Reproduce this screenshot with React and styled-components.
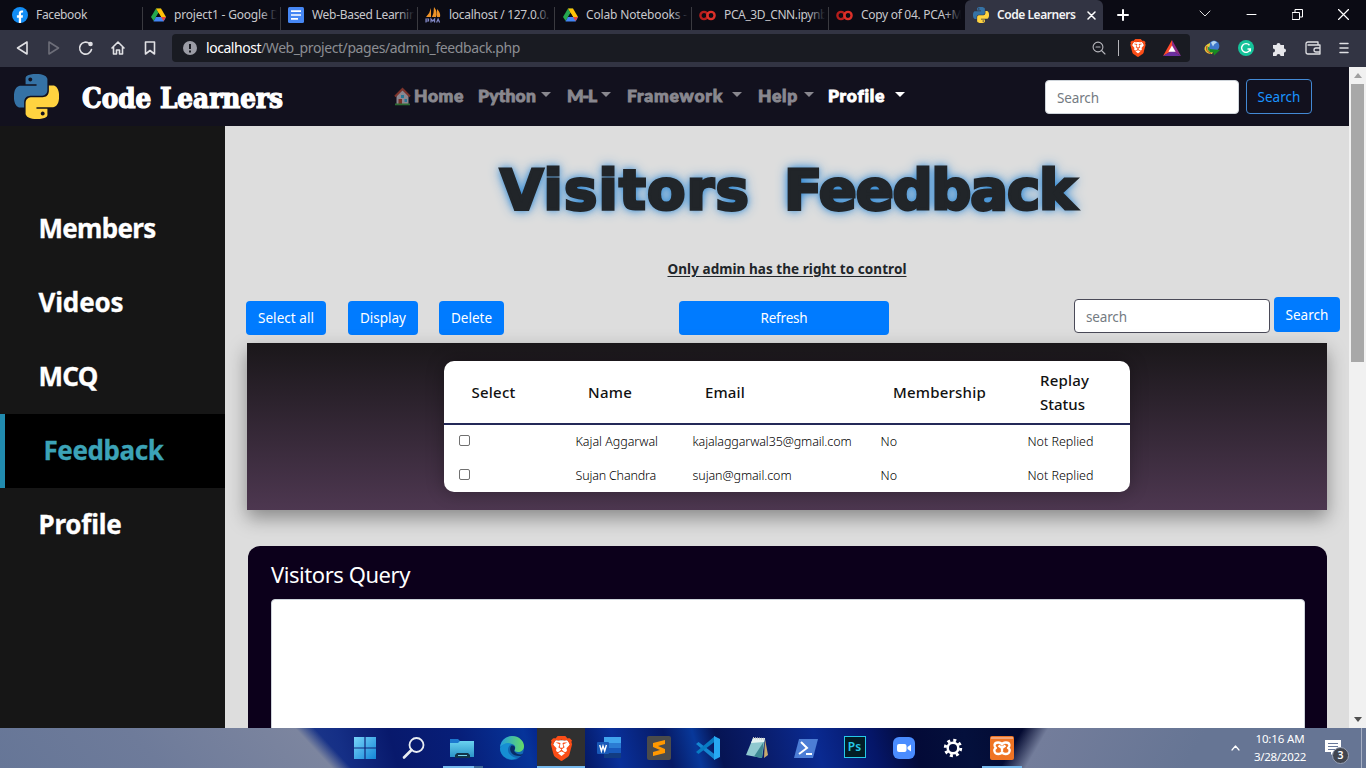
import React, { useLayoutEffect, useRef, useState } from 'react';
import styled, { createGlobalStyle, css } from 'styled-components';
import { SiBrave } from 'react-icons/si';

const UI = '"Noto Sans", "Open Sans", sans-serif';

const Global = createGlobalStyle`
  * { box-sizing: border-box; }
  html, body { margin: 0; width: 1366px; height: 768px; overflow: hidden; }
  body { font: 13px ${UI}; background: #ddd; }
  svg { display: block; flex: none; }
  button, input { font-family: inherit; }
`;

/* Text that is tracked so that it takes exactly the width it is given. */
const Tracked = styled.span`
  display: inline-block;
  flex: none;
  justify-self: start;
  white-space: nowrap;
`;
function Fit({ w, children }) {
  const ref = useRef(null);
  const [gap, setGap] = useState(0);
  useLayoutEffect(() => {
    const natural = ref.current.getBoundingClientRect().width;
    setGap((w - natural) / children.length);
  }, []);
  return <Tracked ref={ref} style={{ letterSpacing: gap + 'px' }}>{children}</Tracked>;
}

const Screen = styled.div`
  width: 1366px; height: 768px; display: flex; flex-direction: column; overflow: hidden;
`;

/* ---------- browser chrome ---------- */
const TabBar = styled.div`
  height: 30px; flex: none; display: flex; background: #0b0b14; color: #c8c8cc; font-size: 12px;
`;
const Tab = styled.div`
  width: ${p => p.$w}px; height: 30px; flex: none; display: flex; align-items: center;
  padding-left: ${p => p.$pad || 7}px; gap: 8px; overflow: hidden; position: relative; line-height: 30px;
  ${p => p.$active ? css`background: #323443; color: #f3f3f5; font-weight: 600; border-radius: 6px 6px 0 0; svg:last-child { margin-left: 3px; }` : ''}
  ${p => p.$fade ? css`&::before { content: ''; position: absolute; right: 1px; top: 0; width: 19px; height: 30px;
    background: linear-gradient(90deg, rgba(11,11,20,0), #0b0b14 85%); }` : ''}
  ${p => p.$line ? css`&::after { content: ''; position: absolute; right: 0; top: 7px; width: 1px; height: 23px; background: #3a3a40; }` : ''}
`;
const WindowButtons = styled.div`
  margin-left: auto; display: flex; width: 167px; justify-content: space-between; align-items: center; padding: 0 17px 2px 0;
`;
const NewTab = styled.div` display: flex; align-items: center; padding-left: 14px; `;
const ToolBar = styled.div`
  height: 37px; flex: none; display: flex; align-items: center; background: #323443; padding: 0 0 1px 14px;
`;
const NavIcons = styled.div` width: 158px; display: flex; gap: 16px; flex: none; `;
const Address = styled.div`
  width: 1018px; height: 28px; border-radius: 4px; background: #191b22; display: flex; align-items: center;
  padding: 0 9px 0 11px; color: #8c8e93; font-size: 14px; flex: none;
`;
const Url = styled.div` margin-left: 9px; flex: 1; display: flex; line-height: 28px; b { font-weight: 400; color: #fff; } `;
const Extensions = styled.div` flex: 1; display: flex; align-items: center; justify-content: space-between; padding: 0 17px 0 14px; `;
const AddressIcons = styled.div` display: flex; align-items: center; gap: 11px; `;
const Divider = styled.i` width: 1px; height: 16px; background: #b5b5ba; margin-left: 1px; `;
const Shield = styled.div` margin: 0 5px 0 -1px; `;

/* ---------- page ---------- */
const Viewport = styled.div` height: 661px; display: flex; flex: none; `;
const Page = styled.div` width: 1349px; display: flex; flex-direction: column; `;
const NavBar = styled.header`
  height: 59px; flex: none; background: #12111e; display: flex; align-items: flex-start; padding-left: 14px;
`;
const Logo = styled.div` padding-top: 7px; width: 68px; `;
const Brand = styled.div`
  width: 312px; color: #fff; font: bold 27.5px/62px "DejaVu Serif Condensed", "DejaVu Serif", serif; font-stretch: condensed;
  -webkit-text-stroke: 1.2px #fff;
`;
const Menu = styled.nav` width: 651px; display: flex; font: 900 17.5px/58px Lato, sans-serif; color: #89888f; `;
const MenuItem = styled.div`
  display: flex; align-items: center; height: 58px; width: ${p => p.$w}px; flex: none;
  -webkit-text-stroke: 0.9px currentColor; ${p => p.$on ? 'color: #fff;' : ''}
  svg { margin-right: 3px; }
`;
const Caret = styled.i`
  margin: 0 0 4px ${p => p.$gap}px; border: solid transparent; border-top-color: currentColor; border-width: 5.500px 5.500px 0;
`;
const Field = styled.input`
  width: ${p => p.$w}px; height: 34px; margin-top: ${p => p.$top || 0}px; padding: 2px 11px 0; border: 1px solid ${p => p.$line};
  border-radius: 4px; background: #fff; font-size: 13.5px; outline: 0; flex: none; letter-spacing: -0.15px;
  &::placeholder { color: #747b82; opacity: 1; }
`;
const OutlineButton = styled.button`
  width: 66px; height: 35px; margin: 12px 0 0 7px; padding: 2px 0 0; border: 1px solid #4389d4; border-radius: 4px;
  background: transparent; color: #1a94ff; font-size: 13.5px; line-height: 31px;
`;
const Body = styled.div` height: 602px; display: flex; `;
const SideBar = styled.aside` width: 225px; background: #161616; padding-top: 66px; flex: none; `;
const SideItem = styled.div`
  height: 74px; display: flex; align-items: center; padding: 0 0 3px 38.500px; color: #fff;
  font: bold 26px/70px "Noto Sans", sans-serif; -webkit-text-stroke: 0.3px currentColor;
  ${p => p.$on ? css`background: #000; color: #3ca3b7; border-left: 5px solid #218baf;` : ''}
`;
const Main = styled.main` width: 1124px; background: #ddd; overflow: hidden; display: flex; flex-direction: column; `;
const Title = styled.h1`
  margin: 26px 0 0 275px; height: 75px; display: flex; gap: 34px; color: #212529; flex: none;
  font: bold 56px/75px "DejaVu Sans", sans-serif;
  -webkit-text-stroke: 3px #212529; text-shadow: 0 0 13px #2a86d4, 0 0 7px #2a86d4;
`;
const Note = styled.div`
  margin: 30px 0 0 442.5px; height: 25px; flex: none; line-height: 24px; font-size: 13.5px; font-weight: 700; color: #212529;
  span { text-decoration: underline; text-underline-offset: 2px; }
`;
const Actions = styled.div` margin-top: 15px; height: 46px; flex: none; padding-left: 21px; display: flex; align-items: flex-start; `;
const Button = styled.button`
  width: ${p => p.$w}px; height: ${p => p.$h || 34}px; margin: ${p => p.$top ?? 4}px 0 0 ${p => p.$gap || 0}px; padding: 0;
  border: 0; border-radius: 4px; background: #007bff; color: #fff; font-size: 13.5px; line-height: 34px; flex: none;
`;
const Spacer = styled.div` width: 185px; flex: none; `;
const Panel = styled.section`
  margin-left: 22px; width: 1080px; height: 167px; flex: none; padding-top: 18px; display: flex; justify-content: center;
  background: linear-gradient(#1a171a, #4d3750); box-shadow: 0 8px 18px rgba(0,0,0,.38);
`;
const Table = styled.div`
  width: 686px; height: 131px; border-radius: 10px; background: #fff; overflow: hidden; color: #212529;
`;
const TableShade = styled.div` height: 131px; border-radius: 10px; box-shadow: 0 0 18px rgba(0,0,0,.3); `;
const Row = styled.div`
  display: grid; grid-template-columns: 116.5px 117px 188px 147px 1fr; align-items: center; height: 34px;
  font-size: 12.5px; color: #000; padding: 0 0 1px 15px; font-weight: 300;
`;
const HeadRow = styled(Row)`
  height: 64px; border-bottom: 2px solid #242958; padding: 0 0 0 27.5px; font-size: 15px; line-height: 24px; font-weight: 500; color: #111;
`;
const Stack = styled.div` display: flex; flex-direction: column; align-items: flex-start; `;
const Check = styled.i` width: 11px; height: 11px; border: 1px solid #707070; border-radius: 2px; background: #fff; margin-bottom: 2px; `;
const Query = styled.section`
  margin: 36px 0 0 23px; width: 1079px; height: 240px; flex: none; background: #0c001b; border-radius: 12px; padding: 13px 22px 0 23px;
`;
const QueryTitle = styled.h2` margin: 0; height: 40px; line-height: 30px; font-size: 22px; font-weight: 400; color: #fff; `;
const QueryBox = styled.div` height: 180px; background: #fff; border: 1px solid #ced4da; border-radius: 4px; `;
const ScrollBar = styled.div`
  width: 17px; background: #f1f1f1; display: flex; flex-direction: column; align-items: center; padding: 6px 0;
`;
const Thumb = styled.div` width: 13px; height: 278px; background: #a8a8a8; margin: 6px 0 auto; `;
const Arrow = styled.i`
  border: 4px solid transparent; height: 5px;
  ${p => p.$up ? 'border-bottom: 5px solid #a0a0a0; border-top: 0;' : 'border-top: 5px solid #505050; border-bottom: 0;'}
`;

/* ---------- taskbar ---------- */
const TaskBar = styled.footer`
  height: 40px; flex: none; display: flex; color: #fff; padding-left: 340px;
  background:
    linear-gradient(47deg, #667697 0, #6e7b9a 120px, #7c859f 243px, rgba(124,133,159,0) 257px) 0 0 / 360px 40px no-repeat,
    linear-gradient(120deg, rgba(115,125,155,0) 20px, #737d9b 42px, #667594 180px) 1000px 0 / 366px 40px no-repeat,
    linear-gradient(75deg, #203c8c 285px, #152f86 335px, #08196c 385px, #071e78 450px, #06349a 515px, #05258c 530px, #04155c 560px,
      #09309a 600px, #071a65 650px, #08389a 678px, #061453 700px, #091c69 740px, #0a2a91 795px, #051668 850px, #030a37 890px, #04103c 940px, #030930 1000px);
`;
const Slot = styled.div`
  width: 49px; height: 40px; display: flex; align-items: center; justify-content: center; flex: none; position: relative;
  ${p => p.$open ? css`background: #303030; width: 48px; margin-left: 1px;` : ''}
  ${p => p.$bar ? css`&::after { content: ''; position: absolute; left: ${p.$open ? 0 : 5}px; bottom: 0; width: ${p.$open ? 48 : 40}px; height: 2px;
    background: ${p.$stack ? 'linear-gradient(90deg,#76b9ed 31px,#3b6799 31px)' : '#76b9ed'}; }` : ''}
`;
const Tray = styled.div` margin-left: auto; display: flex; align-items: center; `;
const Clock = styled.div`
  width: 60px; margin: 0 15px 0 10px; font-size: 11.5px; line-height: 18px; display: flex; flex-direction: column; align-items: center;
`;
const Notice = styled.div` width: 36px; position: relative; height: 40px; padding-top: 12px; `;
const Badge = styled.b`
  position: absolute; left: 7px; top: 19px; width: 17px; height: 17px; border: 1px solid #98a1b5; border-radius: 50%;
  background: #41454f; font: 600 10.5px/15px ${UI}; text-align: center;
`;
const Peek = styled.i` width: 5px; height: 40px; border-left: 1px solid #a7b0c4; `;
const PsTile = styled.div`
  width: 22px; height: 22px; margin-bottom: 2px; border: 1px solid #26c9e8; background: #021d26; color: #26c9e8; font: 600 12px/19px ${UI}; text-align: center;
`;

/* ---------- drawings ---------- */
const snake = 'M14.25.18l.9.2.73.26.59.3.45.32.34.34.25.34.16.33.1.3.04.26.02.2-.01.13V8.5l-.05.63-.13.55-.21.46-.26.38-.3.31-.33.25-.35.19-.35.14-.33.1-.3.07-.26.04-.21.02H8.77l-.69.05-.59.14-.5.22-.41.27-.33.32-.27.35-.2.36-.15.37-.1.35-.07.32-.04.27-.02.21v3.06H3.17l-.21-.03-.28-.07-.32-.12-.35-.18-.36-.26-.36-.36-.35-.46-.32-.59-.28-.73-.21-.88-.14-1.05-.05-1.23.06-1.22.16-1.04.24-.87.32-.71.36-.57.4-.44.42-.33.42-.24.4-.16.36-.1.32-.05.24-.01h.16l.06.01h8.16v-.83H6.18l-.01-2.75-.02-.37.05-.34.11-.31.17-.28.25-.26.31-.23.38-.2.44-.18.51-.15.58-.12.64-.1.71-.06.77-.04.84-.02 1.27.05zm-6.3 1.98l-.23.33-.08.41.08.41.23.34.33.22.41.09.41-.09.33-.22.23-.34.08-.41-.08-.41-.23-.33-.33-.22-.41-.09-.41.09z';
const PythonLogo = ({ size }) => (
  <svg width={size} height={size} viewBox="0 0 24 24"><path d={snake} fill="#3572a5" /><path d={snake} fill="#ffd340" transform="rotate(180 12 12)" /></svg>
);
const FacebookLogo = () => (
  <svg width="16" height="16" viewBox="0 0 16 16"><circle cx="8" cy="8" r="8" fill="#128df5" /><path d="M6.8 16v-5.3H4.9V8.2h1.9V6.5c0-2 1.2-3.1 3-3.1.7 0 1.3.1 1.3.1v1.9h-.9c-.9 0-1.2.6-1.2 1.2v1.6h2l-.3 2.5H9.1V16z" fill="#fff" /></svg>
);
const DriveLogo = () => (
  <svg width="15" height="14" viewBox="0 0 15 14"><path d="M5 .5h5L7.5 5z" fill="#188038" /><path d="M5 .5 7.5 5 2.7 13 0 9z" fill="#25a850" /><path d="M5 .5h5L15 9H10z" fill="#ffc107" /><path d="M5 9h10l-2.3 4.5H2.5z" fill="#4285f4" /><path d="M10 9h5l-2.5 4z" fill="#e8453c" /><path d="M7.5 5 10 9H5z" fill="#0b0b14" /></svg>
);
const DocsLogo = () => (
  <svg width="16" height="16"><rect width="16" height="16" rx="1.5" fill="#4687f4" /><path d="M3 4.2h10M3 8h10M3 11.8h7" stroke="#fff" strokeWidth="1.7" /></svg>
);
const PmaLogo = () => (
  <svg width="16" height="16" viewBox="0 0 16 16"><path d="M6 1v9H1Q5 6 6 1M9 0q4 5 2 10H7Q9 6 9 0M12 2q4 4 3 8h-3z" fill="#ef9428" /><path d="M1 15.500v-3.500h2.500v2H1m5 1.500v-3.500l1.800 2 1.800-2v3.500m2 0 1.500-3.500 1.500 3.500" stroke="#8187c5" fill="none" strokeWidth="1.200" /></svg>
);
const ColabLogo = () => (
  <svg width="17" height="11" viewBox="0 0 17 11"><circle cx="5" cy="5.5" r="3.6" fill="none" stroke="#b51e1c" strokeWidth="2.4" /><circle cx="12" cy="5.5" r="3.6" fill="none" stroke="#dc3029" strokeWidth="2.4" /></svg>
);
const Stroke = ({ w = 16, h = 16, d, c = '#e0e0e4', s = 1.6, fill = 'none', children }) => (
  <svg width={w} height={h} viewBox={`0 0 ${w} ${h}`} fill={fill} stroke={c} strokeWidth={s} strokeLinejoin="round" strokeLinecap="round"><path d={d} />{children}</svg>
);
const BraveLion = ({ size }) => (
  <svg width={size} height={size} viewBox="0 0 24 24"><path d="M6 4h12l2 4-2 10-6 4-6-4L4 8z" fill="#fff" /><SiBrave size={24} color="#fb4d17" /></svg>
);
const BatLogo = () => (
  <svg width="18" height="16" viewBox="0 0 18 16"><path d="M9 0 0 16l9-5z" fill="#ff4a2a" /><path d="M9 0l9 16-9-5z" fill="#8c2a86" /><path d="M0 16h18L9 10.5z" fill="#6a2fa0" /><path d="M9 5.5 5.4 11.8h7.2z" fill="#fff" /></svg>
);
const IdmLogo = () => (
  <svg width="16" height="16" viewBox="0 0 16 16"><circle cx="10" cy="6" r="5.400" fill="#3f78cb" /><path d="M7 2.500q3-3 6 0-3 1-4 4z" fill="#b6d7ef" /><path d="M6 3Q0 5 .5 9.500 2 14 8 14l1-2Q3 11 6 5z" fill="#e3c93a" /><path d="M3 6q-2 5 4 7.500" stroke="#c43824" fill="none" /><path d="M4.500 7q-1 3 3 5" stroke="#2a9a3c" strokeWidth="1.500" fill="none" /><path d="M6 9l10 1-6 5.500-.5-3-3.500-.5z" fill="#178c20" /></svg>
);
const GrammarlyLogo = () => (
  <svg width="16" height="16" viewBox="0 0 16 16"><circle cx="8" cy="8" r="8" fill="#15c39a" /><path d="M11.500 5.300A4.400 4.400 0 1 0 12.300 9H9.500M12.300 9v2.400" stroke="#fff" strokeWidth="1.400" fill="none" /></svg>
);
const Puzzle = () => (
  <svg width="15" height="15" viewBox="0 0 15 15"><path d="M1 4h3.500a2 2 0 1 1 4 0H12v3.500a2 2 0 1 1 0 4V15H8.500a2 2 0 1 0-4 0H1v-3.500a2 2 0 1 0 0-4z" fill="#e6e6ea" /></svg>
);
const House = () => (
  <svg width="17" height="19" viewBox="0 0 17 19"><path d="M2.500 9 8.500 3l6 6v8h-12z" fill="#8c8791" /><path d="M1 9.500 8.500 2 16 9.500" stroke="#7e332b" strokeWidth="2" fill="none" /><path d="M7 8h3v3H7zM10.500 12h2.500v3h-2.500z" fill="#287796" /><path d="M4.500 12h3.500v5H4.500z" fill="#783127" /><path d="M1 17.400h15" stroke="#2e6c35" strokeWidth="1.800" /></svg>
);
const WindowsLogo = () => (
  <svg width="22" height="22" viewBox="0 0 22 22"><defs><linearGradient id="win" x2="1" y2="1"><stop stopColor="#78d4f8" /><stop offset="1" stopColor="#1386d8" /></linearGradient></defs><path d="M0 0h10.4v10.4H0zM11.6 0H22v10.4H11.6zM0 11.6h10.4V22H0zM11.6 11.6H22V22H11.6z" fill="url(#win)" /></svg>
);
const Explorer = () => (
  <svg width="25" height="21" viewBox="0 0 25 21"><defs><linearGradient id="folder" x2="0" y2="1"><stop stopColor="#6ad2f0" /><stop offset="1" stopColor="#2b93c8" /></linearGradient></defs><path d="M0 1h8l2 2h14v6H0z" fill="#1c78cf" /><path d="M0 5h8l2-2h14v16H0z" fill="url(#folder)" /><path d="M5 20v-3l2-2h11l2 2v3z" fill="#12324a" /><path d="M8 17.500h9" stroke="#71d2ee" /></svg>
);
const Edge = () => (
  <svg width="24" height="24" viewBox="0 0 24 24"><defs><linearGradient id="edge" x2="1"><stop stopColor="#239ee0" /><stop offset="1" stopColor="#66dc65" /></linearGradient></defs><circle cx="12" cy="12" r="12" fill="#1268b4" /><path d="M0 11C1 4 6 0 12 0c7 0 12 5 12 10 0 4-3 6-6 6s-4-1-3-3c1-3-1-5-4-5C6 8 2 9 0 11z" fill="url(#edge)" /><path d="M12 8c-6 2-6 12 5 14-7 4-17-1-17-10 3-5 8-6 12-4z" fill="#168fd3" /><path d="M11 10c-3 5 2 11 10 10l2-2c-3 1-7 0-8-2-2-1 0-2 0-4s-2-3-4-2z" fill="#082c67" /></svg>
);
const Word = () => (
  <svg width="25" height="22" viewBox="0 0 25 22"><path d="M7 0h17v6H7z" fill="#41a5ee" /><path d="M7 6h17v5H7z" fill="#2b7cd3" /><path d="M7 11h17v5H7z" fill="#185abd" /><path d="M7 16h17v5H7z" fill="#123c82" /><rect y="5" width="12" height="12" rx="1" fill="#1959b8" /><path d="m2.700 8 1.700 6L6 9l1.700 5 1.700-6" stroke="#fff" strokeWidth="1.400" fill="none" /></svg>
);
const Sublime = () => (
  <svg width="24" height="24" viewBox="0 0 24 24"><rect width="24" height="24" rx="2" fill="#4b4b4b" /><path d="m18 4v4l-7 2 7 3v4L6 20v-4l7-2-7-3V7z" fill="#ff9800" /></svg>
);
const VsCode = () => (
  <svg width="24" height="24" viewBox="0 0 24 24"><path d="M0 8l2.500-2L19 18.500V24z" fill="#1586d1" /><path d="M0 16l2.500 2L19 5.500V0z" fill="#087bc3" /><path d="m18 0 6 3v18l-6 3z" fill="#27a9f2" /></svg>
);
const Notepad = () => (
  <svg width="24" height="22" viewBox="0 0 24 22"><path d="m20 2 3 16-4 3z" fill="#c7a96e" /><path d="M8 1h12l-3 20L1 18z" fill="#8fc9cf" /><path d="M8 1h12l-1 4L6 6z" fill="#e4f3f1" /><path d="M18.500 5 9 19.500l8 1.500z" fill="#3e8a94" /><path d="m8 1 12 1" stroke="#ccc" strokeWidth="2" strokeDasharray="1 1" /></svg>
);
const PowerShell = () => (
  <svg width="24" height="19" viewBox="0 0 24 19"><path d="M5 0h19l-5 19H0z" fill="#4c7dd5" /><path d="m7 3 6 6-8 6M12 15h6" stroke="#fff" strokeWidth="2" fill="none" /></svg>
);
const Zoom = () => (
  <svg width="22" height="22" viewBox="0 0 22 22"><rect width="22" height="22" rx="6" fill="#4a8cff" /><rect x="4" y="7" width="9.500" height="8" rx="2" fill="#fff" /><path d="m14.500 10 3.500-2.500v7L14.500 12z" fill="#fff" /></svg>
);
const Gear = () => (
  <svg width="20" height="20" viewBox="0 0 20 20"><circle cx="10" cy="10" r="7.700" fill="none" stroke="#fff" strokeWidth="3" strokeDasharray="3 3.050" /><circle cx="10" cy="10" r="5.300" fill="none" stroke="#fff" strokeWidth="2.500" /></svg>
);
const Xampp = () => (
  <svg width="24" height="24" viewBox="0 0 24 24"><rect width="24" height="24" rx="2" fill="#ef7424" /><path d="M1 1h22v2H1z" fill="#f3a477" /><path d="M12 8.500C11 6 5 5.500 4.500 9c0 1.500.7 2.500 1.500 3-1 .5-2 2-1.500 3.500C5.500 19 11 18.500 12 16c1 2.500 6.500 3 7.500-.5.5-1.500-.5-3-1.500-3.500.8-.5 1.500-1.500 1.500-3C19 5.500 13 6 12 8.500zM8.500 9.500 12 12l3.500-2.500M12 12v3" fill="none" stroke="#fff" strokeWidth="2.300" strokeLinejoin="round" /></svg>
);

const tabs = [
  [143, 'Facebook', 51, <FacebookLogo />, 12],
  [138, 'project1 - Google D', 105, <DriveLogo />, 8],
  [137, 'Web-Based Learnin', 104, <DocsLogo />, 7],
  [137, 'localhost / 127.0.0.', 100, <PmaLogo />, 7],
  [137, 'Colab Notebooks -', 101, <DriveLogo />, 8],
  [137, 'PCA_3D_CNN.ipynb', 103, <ColabLogo />, 7],
  [136, 'Copy of 04. PCA+M', 101, <ColabLogo />, 7],
];
const menu = [
  [84, 'Home', 50, -1], [89, 'Python', 58, 5], [60, 'M-L', 29, 4.5], [131, 'Framework', 96, 9], [70, 'Help', 40, 5.5], [90, 'Profile', 57, 10],
];
const people = [
  ['Kajal Aggarwal', 82.5, 'kajalaggarwal35@gmail.com', 159],
  ['Sujan Chandra', 80.5, 'sujan@gmail.com', 99],
];

export default function App() {
  return (
    <Screen>
      <Global />
      <TabBar>
        {tabs.map(([w, label, tw, icon, pad], i) => (
          <Tab key={label} $w={w} $pad={pad} $fade={i > 0} $line={i < 6}>{icon}<Fit w={tw}>{label}</Fit></Tab>
        ))}
        <Tab $w={138} $active $pad={8}>
          <PythonLogo size={16} /><Fit w={78.5}>Code Learners</Fit>
          <Stroke w={9} h={9} d="m1 1 7 7M8 1 1 8" c="#fff" s={1.500} />
        </Tab>
        <NewTab><Stroke w={12} h={12} d="M6 1v10M1 6h10" c="#fff" s={2} /></NewTab>
        <WindowButtons>
          <Stroke w={12} h={8} d="m1 1 5 5 5-5" c="#ddd" s={1} />
          <Stroke w={11} h={2} d="M1 1.500h9" c="#fff" s={1} />
          <Stroke w={11} h={11} d="M.5 3.500h7v7h-7zM3 3V.5h7.500V8H8" c="#fff" s={1} />
          <Stroke w={11} h={11} d="m.5.5 10 10M10.500.5l-10 10" c="#fff" s={1.200} />
        </WindowButtons>
      </TabBar>
      <ToolBar>
        <NavIcons>
          <Stroke d="M13 2v12L3.500 8z" />
          <Stroke d="M3 2v12l9.500-6z" c="#6d6e79" />
          <Stroke d="M13.500 9.500A6 6 0 1 1 11.500 3.500"><circle cx="12.500" cy="4" r="1.500" fill="#e0e0e4" /></Stroke>
          <Stroke d="M2 8l6-6 6 6M3.500 7v7H6.500v-4h3v4h3V7" />
          <Stroke d="M3.500 2h9v12L8 10.500 3.500 14z" />
        </NavIcons>
        <Address>
          <svg width="14" height="14"><circle cx="7" cy="7" r="7" fill="#9b9ca5" /><path d="M7 3v5M7 9.500v2" stroke="#191b22" strokeWidth="2" /></svg>
          <Url><b><Fit w={55}>localhost</Fit></b><Fit w={259}>/Web_project/pages/admin_feedback.php</Fit></Url>
          <AddressIcons>
            <Stroke w={14} h={14} d="M9.500 9.500 13 13M4 6h4" c="#b6b6bc" s={1.100}><circle cx="6" cy="6" r="4.900" /></Stroke>
            <Divider />
            <Shield><BraveLion size={18} /></Shield>
            <BatLogo />
          </AddressIcons>
        </Address>
        <Extensions>
          <IdmLogo /><GrammarlyLogo /><Puzzle />
          <Stroke d="M13 4V2H3Q1 2 1 4v8q0 2 2 2h12V5H3M15 8h-4q-2 0-2 2t2 2h4" s={1.300} />
          <Stroke w={10} h={12} d="M1 1.500h8M1 6h8M1 10.500h8" s={1.500} />
        </Extensions>
      </ToolBar>

      <Viewport>
        <Page>
          <NavBar>
            <Logo><PythonLogo size={45} /></Logo>
            <Brand><Fit w={201}>Code Learners</Fit></Brand>
            <Menu>
              {menu.map(([w, label, tw, gap]) => (
                <MenuItem key={label} $w={w} $on={label === 'Profile'}>
                  {label === 'Home' && <House />}
                  <Fit w={tw}>{label}</Fit>
                  {gap > 0 && <Caret $gap={gap} />}
                </MenuItem>
              ))}
            </Menu>
            <Field $w={194} $top={13} $line="#ced4da" placeholder="Search" />
            <OutlineButton><Fit w={43}>Search</Fit></OutlineButton>
          </NavBar>
          <Body>
            <SideBar>
              <SideItem><Fit w={117}>Members</Fit></SideItem>
              <SideItem><Fit w={85}>Videos</Fit></SideItem>
              <SideItem><Fit w={59}>MCQ</Fit></SideItem>
              <SideItem $on><Fit w={120}>Feedback</Fit></SideItem>
              <SideItem><Fit w={83}>Profile</Fit></SideItem>
            </SideBar>
            <Main>
              <Title><Fit w={250}>Visitors</Fit><Fit w={291}>Feedback</Fit></Title>
              <Note><Fit w={239}>Only admin has the right to control</Fit></Note>
              <Actions>
                <Button $w={80}><Fit w={56}>Select all</Fit></Button>
                <Button $w={70} $gap={22}><Fit w={46}>Display</Fit></Button>
                <Button $w={65} $gap={21}><Fit w={41}>Delete</Fit></Button>
                <Button $w={210} $gap={175}><Fit w={47}>Refresh</Fit></Button>
                <Spacer />
                <Field $w={196} $top={2} $line="#4a4a58" placeholder="search" />
                <Button $w={66} $gap={4} $top={0} $h={35}><Fit w={43}>Search</Fit></Button>
              </Actions>
              <Panel>
                <TableShade>
                  <Table>
                    <HeadRow>
                      <Fit w={44}>Select</Fit><Fit w={44}>Name</Fit><Fit w={40}>Email</Fit><Fit w={93}>Membership</Fit>
                      <Stack><Fit w={49}>Replay</Fit><Fit w={45}>Status</Fit></Stack>
                    </HeadRow>
                    {people.map(([name, nw, mail, mw]) => (
                      <Row key={name}>
                        <Check /><Fit w={nw}>{name}</Fit><Fit w={mw}>{mail}</Fit><Fit w={17}>No</Fit><Fit w={66}>Not Replied</Fit>
                      </Row>
                    ))}
                  </Table>
                </TableShade>
              </Panel>
              <Query>
                <QueryTitle><Fit w={139}>Visitors Query</Fit></QueryTitle>
                <QueryBox />
              </Query>
            </Main>
          </Body>
        </Page>
        <ScrollBar><Arrow $up /><Thumb /><Arrow /></ScrollBar>
      </Viewport>

      <TaskBar>
        <Slot><WindowsLogo /></Slot>
        <Slot><Stroke w={24} h={24} d="M9.500 14 2 21.500" c="#e9edf2" s={2.600}><circle cx="14.500" cy="9" r="7" strokeWidth="1.800" /></Stroke></Slot>
        <Slot $bar $stack><Explorer /></Slot>
        <Slot><Edge /></Slot>
        <Slot $open $bar><BraveLion size={25} /></Slot>
        <Slot><Word /></Slot>
        <Slot><Sublime /></Slot>
        <Slot><VsCode /></Slot>
        <Slot><Notepad /></Slot>
        <Slot><PowerShell /></Slot>
        <Slot><PsTile>Ps</PsTile></Slot>
        <Slot><Zoom /></Slot>
        <Slot><Gear /></Slot>
        <Slot $bar><Xampp /></Slot>
        <Tray>
          <Stroke w={9} h={6} d="m1 5 3.500-4L8 5" c="#fff" s={1.200} />
          <Clock><Fit w={49}>10:16 AM</Fit><Fit w={52}>3/28/2022</Fit></Clock>
          <Notice>
            <svg width="16" height="16"><path d="M0 0h16v12H9l-3 3v-3H0z" fill="#fff" /><path d="M3 3.500h10M3 6.500h10M3 9.500h7" stroke="#68789a" /></svg>
            <Badge>3</Badge>
          </Notice>
          <Peek />
        </Tray>
      </TaskBar>
    </Screen>
  );
}
